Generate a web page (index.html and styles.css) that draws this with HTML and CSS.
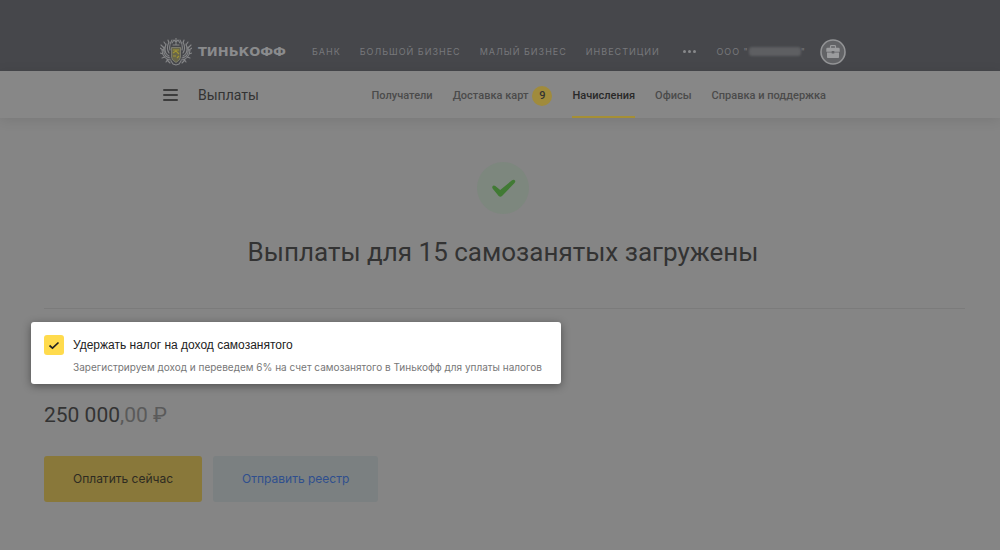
FILE: index.html
```html
<!DOCTYPE html>
<html lang="ru">
<head>
<meta charset="utf-8">
<meta name="viewport" content="width=device-width, initial-scale=1">
<title>Выплаты</title>
<link rel="stylesheet" href="styles.css">
</head>
<body>
<header class="topbar">
  <div class="topbar-inner">
    <a class="brand" href="#">
      <svg class="crest" viewBox="0 0 32 28" aria-hidden="true">
        <g fill="none" stroke="#858688" stroke-width="1.1" stroke-linecap="round">
          <path d="M11 22C6 22 2 18 2 12M10 20C5 19 3 15 4 9M9 18C5 16 4 12 6 6M9 15C7 12 7 8 9 4M10 12C9 8 10 5 12 2M3 12L0 10M4 10L1 7M6 7L4 4M9 5L8 2M3 16L0 15M5 19L2 20M8 21L6 24M7 22L10 25"/>
          <path d="M21 22C26 22 30 18 30 12M22 20C27 19 29 15 28 9M23 18C27 16 28 12 26 6M23 15C25 12 25 8 23 4M22 12C23 8 22 5 20 2M29 12L32 10M28 10L31 7M26 7L28 4M23 5L24 2M29 16L32 15M27 19L30 20M24 21L26 24M25 22L22 25"/>
          <path d="M12 5L14 2L16 4L18 2L20 5M13 7H19M16 0V7M11 23L13 26L16 27L19 26L21 23"/>
        </g>
        <path d="M11.500 9.500H20.500V19Q20.500 22 16 24.500Q11.500 22 11.500 19Z" fill="#68664a" stroke="#858577" stroke-width="0.800"/>
        <path d="M13 12H19M13 15L16 13L19 16M13 18H16M17 20L19 18" stroke="#a09432" stroke-width="1.100" fill="none"/>
      </svg>
      <span class="brand-name">ТИНЬКОФФ</span>
    </a>
    <nav class="sections" aria-label="Разделы">
      <a href="#">БАНК</a>
      <a href="#">БОЛЬШОЙ БИЗНЕС</a>
      <a href="#">МАЛЫЙ БИЗНЕС</a>
      <a href="#">ИНВЕСТИЦИИ</a>
      <button class="more" type="button" aria-label="Ещё"><i></i><i></i><i></i></button>
    </nav>
    <a class="company" href="#">ООО "<span class="masked"></span>"</a>
    <button class="profile" type="button" aria-label="Профиль">
      <svg viewBox="0 0 26 26" aria-hidden="true">
        <circle cx="13" cy="13" r="12" fill="#626366" stroke="#939496" stroke-width="1.6"/>
        <path d="M10.500 9V7.500Q10.500 6.700 11.300 6.700H14.700Q15.500 6.700 15.500 7.500V9" fill="none" stroke="#9b9c9e" stroke-width="1.200"/>
        <path d="M7.500 8.800H18.500Q19.700 8.800 19.700 10V12.700H14.300V12H11.700V12.700H6.300V10Q6.300 8.800 7.500 8.800Z" fill="#9b9c9e"/>
        <path d="M7 13.600H11.700V14.600H14.300V13.600H19V18.300Q19 19 18.300 19H7.700Q7 19 7 18.300Z" fill="#9b9c9e"/>
      </svg>
    </button>
  </div>
</header>
<div class="subbar">
  <div class="subbar-inner">
    <button class="menu" type="button" aria-label="Меню"><i></i><i></i><i></i></button>
    <span class="product">Выплаты</span>
    <nav class="tabs" aria-label="Выплаты">
      <a href="#">Получатели</a>
      <a href="#">Доставка карт<span class="count">9</span></a>
      <a class="active" href="#" aria-current="page">Начисления</a>
      <a href="#">Офисы</a>
      <a href="#">Справка и поддержка</a>
    </nav>
  </div>
</div>
<main class="content">
  <div class="result">
    <svg class="success" viewBox="0 0 52 52" aria-hidden="true">
      <circle cx="26" cy="26" r="26" fill="#7d877e"/>
      <path d="M15.300 24.800Q16.300 22.800 18.300 24L23.200 28L35 18.300Q37 17 38 18.400Q38.800 19.600 37.500 21L25 34Q23.300 35.500 21.700 34L15.800 26.700Q15 25.800 15.300 24.800Z" fill="#417a34"/>
    </svg>
    <h1>Выплаты для 15 самозанятых загружены</h1>
  </div>
  <label class="tax" for="tax">
    <input id="tax" type="checkbox" checked>
    <span class="tax-text">
      <span class="tax-title">Удержать налог на доход самозанятого</span>
      <span class="tax-note">Зарегистрируем доход и переведем 6% на счет самозанятого в Тинькофф для уплаты налогов</span>
    </span>
  </label>
  <p class="sum">250 000<span>,00 ₽</span></p>
  <div class="actions">
    <button class="pay" type="button">Оплатить сейчас</button>
    <button class="send" type="button">Отправить реестр</button>
  </div>
</main>
</body>
</html>
```
FILE: styles.css
```css
* { box-sizing: border-box; }
body {
  margin: 0;
  min-height: 100vh;
  background: #858585;
  color: #333;
  font-family: Inter, "Liberation Sans", sans-serif;
}
a { color: inherit; text-decoration: none; }
button { margin: 0; padding: 0; border: 0; background: none; font: inherit; color: inherit; cursor: pointer; }
.topbar { padding: 36px 0 4px 6px; background: #46474b; }
.topbar-inner, .subbar-inner {
  display: flex;
  align-items: center;
  max-width: 686px;
  margin: 0 auto;
}
.topbar-inner { height: 31px; }
.brand { display: flex; align-items: center; gap: 6px; }
.crest { width: 32px; height: 28px; }
.brand-name { font-family: "DejaVu Sans", sans-serif; font-size: 13px; font-weight: 700; color: #8a8b8d; }
.sections {
  display: flex;
  align-items: center;
  gap: 19px;
  margin-left: 26px;
  font-size: 9px;
  letter-spacing: 1px;
  color: #77787b;
  white-space: nowrap;
}
.more { display: flex; gap: 2px; padding: 4px; }
.more i { width: 3px; height: 3px; border-radius: 50%; background: #88898b; }
.company { display: flex; align-items: center; margin-left: auto; font-size: 9px; letter-spacing: 1px; color: #77787b; white-space: nowrap; }
.masked { width: 52px; height: 9px; border-radius: 3px; background: #5e5f62; filter: blur(1px); }
.profile { width: 26px; height: 26px; margin-left: 14px; }
.profile svg { display: block; }
.subbar { padding-left: 6px; background: #878787; box-shadow: 0 2px 12px rgba(0, 0, 0, .1); }
.subbar-inner { height: 47px; }
.menu { display: grid; gap: 3px; width: 15px; margin-left: 3px; }
.menu i { height: 2px; border-radius: 1px; background: #3c3c3c; }
.product { margin-left: 20px; font-family: Roboto, sans-serif; font-size: 14px; color: #333; }
.tabs {
  display: flex;
  align-self: stretch;
  gap: 20px;
  margin-left: auto;
  margin-right: 20px;
  font-family: Roboto, sans-serif;
  font-size: 11px;
  font-weight: 500;
  color: #4b4b4b;
  white-space: nowrap;
}
.tabs a { display: flex; align-items: center; border: solid transparent; border-width: 4px 0 2px; }
.tabs .active { color: #292929; border-bottom-color: #a58f35; }
.count {
  width: 20px;
  margin-left: 4px;
  border-radius: 10px;
  background: #a08b3c;
  color: #333;
  line-height: 20px;
  text-align: center;
}
.content { padding: 44px 35px 48px 44px; }
.result { display: flex; flex-direction: column; align-items: center; border-bottom: 1px solid #7b7b7b; padding: 0 3px 37px 0; }
.success { width: 52px; height: 52px; }
h1 { margin: 19px 0 0; font-family: Roboto, sans-serif; font-size: 26px; font-weight: 400; line-height: 38px; color: #333; }
.tax {
  display: flex;
  gap: 9px;
  width: fit-content;
  margin: 13px 0 0 -13px;
  padding: 13px 19px 10px 13px;
  border-radius: 3px;
  background: #fff;
  box-shadow: 0 2px 8px rgba(0, 0, 0, .4);
}
.tax input {
  appearance: none;
  flex: none;
  width: 20px;
  height: 20px;
  margin: 0;
  border-radius: 3px;
  background: #ffdb4d url("data:image/svg+xml,%3Csvg xmlns='http://www.w3.org/2000/svg' viewBox='0 0 20 20'%3E%3Cpath d='M5.500 10.500L8.500 13.200L14.500 7.500' fill='none' stroke='%23222' stroke-width='1.700'/%3E%3C/svg%3E") center / 20px;
}
.tax-text { display: grid; gap: 5px; }
.tax-title { font-family: "Liberation Sans", sans-serif; font-size: 12px; line-height: 20px; color: #222; }
.tax-note { font-size: 10px; line-height: 14px; color: #777; }
.sum { margin: 17px 0 0; font-family: Roboto, sans-serif; font-size: 21px; line-height: 28px; color: #333; }
.sum span { color: #5a5a5a; }
.actions { display: flex; gap: 11px; margin-top: 27px; }
.actions button { padding: 0 29px; border-radius: 3px; font-size: 12px; line-height: 46px; }
.actions .pay { background: #89783a; color: #2e2b22; }
.actions .send { background: #7b8081; color: #2f4f8e; }
```
